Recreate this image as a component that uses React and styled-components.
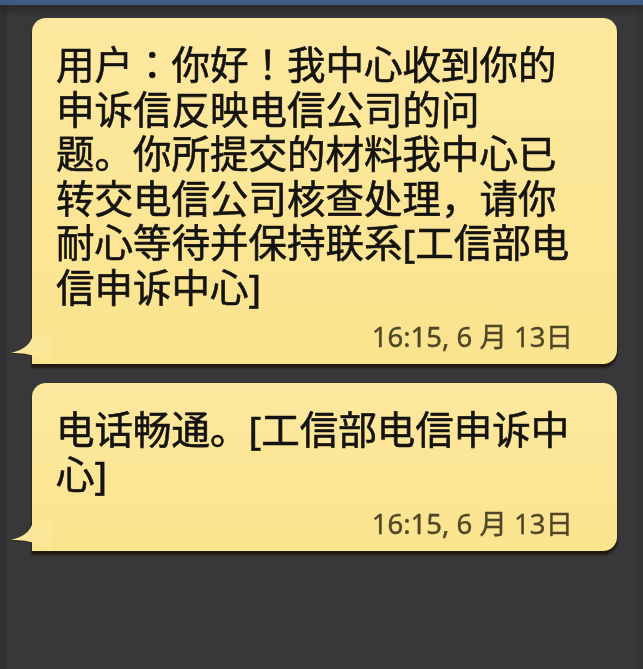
import styled, { createGlobalStyle } from "styled-components";

const GlobalStyle = createGlobalStyle`
  html, body {
    margin: 0;
    padding: 0;
    background: #383739;
  }
  body {
    font-family: "Noto Sans", "Noto Sans CJK SC", sans-serif;
  }
`;

const messages = [
  {
    lines: [
      "用户：你好！我中心收到你的",
      "申诉信反映电信公司的问",
      "题。你所提交的材料我中心已",
      "转交电信公司核查处理，请你",
      "耐心等待并保持联系[工信部电",
      "信申诉中心]",
    ],
    time: "16:15, 6 月 13日",
  },
  {
    lines: ["电话畅通。[工信部电信申诉中", "心]"],
    time: "16:15, 6 月 13日",
  },
];

export default function App() {
  return (
    <>
      <GlobalStyle />
      <Screen>
        <StatusEdge />
        <Thread>
          {messages.map((m, i) => (
            <Bubble key={i}>
              <Tail viewBox="0 0 40 30" width="40" height="30">
                <path d="M22 0 Q20 14 0 19 Q24 18 38 30 L40 30 L40 0 Z" fill="#fce697" />
              </Tail>
              <Body>
                {m.lines.map((l, j) => (
                  <Line key={j}>{l}</Line>
                ))}
              </Body>
              <Time>{m.time}</Time>
            </Bubble>
          ))}
        </Thread>
      </Screen>
    </>
  );
}

const Screen = styled.div`
  width: 643px;
  height: 669px;
  background: #383739;
  box-shadow: inset 7px 0 0 #313033, inset -6px 0 0 #343336;
  display: flex;
  flex-direction: column;
  overflow: hidden;
`;

const StatusEdge = styled.div`
  height: 5px;
  background: #3c5a84;
  box-shadow: 0 3px 8px rgba(20, 18, 16, 0.7);
`;

const Thread = styled.div`
  display: flex;
  flex-direction: column;
  gap: 19px;
  padding: 13px 26px 0 32px;
`;

const Bubble = styled.div`
  position: relative;
  background: linear-gradient(#fde89f, #fbe48e);
  border-radius: 14px 14px 14px 0;
  padding: 24px 44px 12px 24px;
  display: flex;
  flex-direction: column;
  box-shadow: 0 3px 2px #201b12;
  filter: drop-shadow(0 1px 0 #2a2418);
`;

const Tail = styled.svg`
  position: absolute;
  left: -21px;
  bottom: 0;
  display: block;
`;

const Body = styled.div`
  font-family: "Noto Sans", "Noto Sans CJK JP", sans-serif;
  font-size: 38.5px;
  line-height: 44.5px;
  color: #141310;
  -webkit-text-stroke: 0.6px #141310;
`;

const Line = styled.div`
  white-space: nowrap;
`;

const Time = styled.div`
  margin-top: 12px;
  align-self: flex-end;
  font-family: "Noto Sans", "Noto Sans CJK JP", sans-serif;
  font-size: 27.5px;
  line-height: 31px;
  color: #4f4727;
  -webkit-text-stroke: 0.4px #4f4727;
`;
